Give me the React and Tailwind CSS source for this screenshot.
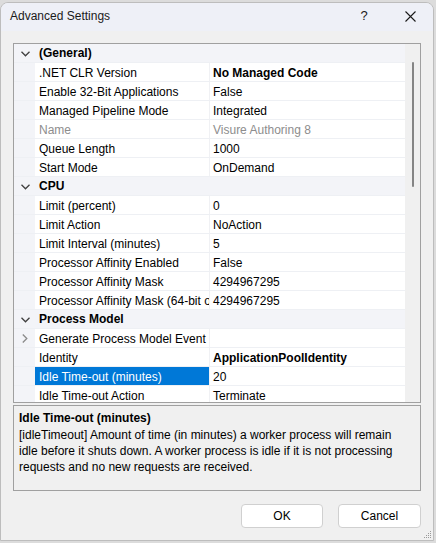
import React from "react";

const rows = [
  { type: "cat", name: "(General)" },
  { name: ".NET CLR Version", value: "No Managed Code", bold: true },
  { name: "Enable 32-Bit Applications", value: "False" },
  { name: "Managed Pipeline Mode", value: "Integrated" },
  { name: "Name", value: "Visure Authoring 8", disabled: true },
  { name: "Queue Length", value: "1000" },
  { name: "Start Mode", value: "OnDemand" },
  { type: "cat", name: "CPU" },
  { name: "Limit (percent)", value: "0" },
  { name: "Limit Action", value: "NoAction" },
  { name: "Limit Interval (minutes)", value: "5" },
  { name: "Processor Affinity Enabled", value: "False" },
  { name: "Processor Affinity Mask", value: "4294967295" },
  { name: "Processor Affinity Mask (64-bit option)", value: "4294967295" },
  { type: "cat", name: "Process Model" },
  { name: "Generate Process Model Event Log Entry", value: "", collapsed: true },
  { name: "Identity", value: "ApplicationPoolIdentity", bold: true },
  { name: "Idle Time-out (minutes)", value: "20", selected: true },
  { name: "Idle Time-out Action", value: "Terminate" },
  { name: "Maximum Worker Processes", value: "1" },
];

function ChevronDown() {
  return (
    <svg width="9" height="6" viewBox="0 0 9 6" className="block">
      <path d="M0.5 0.8 L4.5 4.8 L8.5 0.8" fill="none" stroke="#404040" strokeWidth="1.3" />
    </svg>
  );
}

function ChevronRight() {
  return (
    <svg width="6" height="9" viewBox="0 0 6 9" className="block">
      <path d="M0.8 0.5 L4.8 4.5 L0.8 8.5" fill="none" stroke="#8a8a8a" strokeWidth="1.3" />
    </svg>
  );
}

function Row({ r }) {
  if (r.type === "cat") {
    return (
      <div className="flex h-[18px] bg-[#f3f4f8] items-center overflow-hidden">
        <div className="w-[21px] flex justify-center pl-[1px] pt-[1px]">
          <ChevronDown />
        </div>
        <div className="pl-[4px] font-bold text-black leading-[20px]">{r.name}</div>
      </div>
    );
  }
  return (
    <div className="flex h-[18px] bg-[#f3f4f8]">
      <div className="w-[21px] flex items-center justify-center pl-[1px] pt-[1px]">
        {r.collapsed ? <ChevronRight /> : null}
      </div>
      <div
        className={
          "w-[174px] h-[18px] pl-[4px] overflow-hidden whitespace-nowrap leading-[20px] " +
          (r.selected ? "bg-[#0078d7] text-white" : "bg-white " + (r.disabled ? "text-[#8d8d8d]" : "text-black"))
        }
      >
        {r.name}
      </div>
      <div className="w-[1px] h-[18px] bg-[#f0f1f4]" />
      <div
        className={
          "flex-1 h-[18px] bg-white pl-[3px] overflow-hidden whitespace-nowrap leading-[20px] " +
          (r.bold ? "font-bold " : "") +
          (r.disabled ? "text-[#8d8d8d]" : "text-black")
        }
      >
        {r.value}
      </div>
    </div>
  );
}

export default function App() {
  return (
    <div
      className="w-[436px] h-[543px] bg-[#dcdcdc] text-[12px] overflow-hidden"
      style={{ fontFamily: '"Liberation Sans", Arial, sans-serif' }}
    >
      <div className="mt-[2px] w-[434px] h-[539px] bg-[#f0f0f0] border border-[#bdbdbd] rounded-t-[8px] flex flex-col overflow-hidden">
        {/* Title bar */}
        <div className="h-[28px] bg-[#eef0f7] flex items-center shrink-0 pb-[2px]">
          <div className="pl-[9px] flex-1 text-[#1a1a1a]">Advanced Settings</div>
          <div className="w-[46px] flex justify-center text-[#1a1a1a] text-[13px]">?</div>
          <div className="w-[46px] flex justify-center">
            <svg width="11" height="11" viewBox="0 0 11 11">
              <path d="M0.5 0.5 L10.5 10.5 M10.5 0.5 L0.5 10.5" stroke="#1a1a1a" strokeWidth="1.1" />
            </svg>
          </div>
        </div>

        {/* Body */}
        <div className="flex-1 flex flex-col px-[12px] pt-[12px]">
          {/* Property grid */}
          <div className="h-[360px] border border-[#a0a0a0] flex bg-[#f0f0f0]">
            <div className="w-[391px] h-[358px] overflow-hidden flex flex-col">
              {rows.map((r, i) => (
                <div key={i} className="border-b border-[#eef0f4]">
                  <Row r={r} />
                </div>
              ))}
            </div>
            <div className="flex-1 bg-[#f0f0f0] relative">
              <div className="absolute left-[7px] top-[18px] w-[2px] h-[125px] bg-[#858585] rounded-full" />
            </div>
          </div>

          {/* Description */}
          <div className="mt-[2px] h-[86px] border border-[#a0a0a0] bg-[#f0f0f0] px-[5px] pt-[3px] text-black">
            <div className="font-bold leading-[18px]">Idle Time-out (minutes)</div>
            <div className="leading-[16px] whitespace-nowrap">
              <div>[idleTimeout] Amount of time (in minutes) a worker process will remain</div>
              <div>idle before it shuts down. A worker process is idle if it is not processing</div>
              <div>requests and no new requests are received.</div>
            </div>
          </div>

          {/* Buttons */}
          <div className="flex justify-end gap-[15px] mt-[13px]">
            <button className="w-[82px] h-[24px] bg-white border border-[#d0d0d0] rounded-[4px] text-black text-[12px]">
              OK
            </button>
            <button className="w-[83px] h-[24px] bg-white border border-[#d0d0d0] rounded-[4px] text-black text-[12px]">
              Cancel
            </button>
          </div>
        </div>
        <div className="h-[12px] flex justify-end items-end pr-[1px] pb-[1px] shrink-0">
          <svg width="8" height="8" viewBox="0 0 8 8">
            <rect x="6" y="0" width="1" height="1" fill="#9a9a9a" />
            <rect x="4" y="2" width="1" height="1" fill="#9a9a9a" />
            <rect x="6" y="2" width="1" height="1" fill="#9a9a9a" />
            <rect x="2" y="4" width="1" height="1" fill="#9a9a9a" />
            <rect x="4" y="4" width="1" height="1" fill="#9a9a9a" />
            <rect x="6" y="4" width="1" height="1" fill="#9a9a9a" />
            <rect x="0" y="6" width="1" height="1" fill="#9a9a9a" />
            <rect x="2" y="6" width="1" height="1" fill="#9a9a9a" />
            <rect x="4" y="6" width="1" height="1" fill="#9a9a9a" />
            <rect x="6" y="6" width="1" height="1" fill="#9a9a9a" />
          </svg>
        </div>
      </div>
    </div>
  );
}
